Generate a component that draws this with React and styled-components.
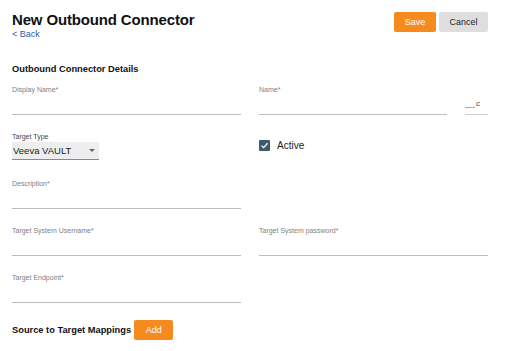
import React from "react";
import styled, { createGlobalStyle } from "styled-components";

const Global = createGlobalStyle`
  html, body { margin: 0; padding: 0; background: #fff; }
  body { font-family: "Liberation Sans", Arial, Helvetica, sans-serif; color: #111; }
  * { box-sizing: border-box; }
`;

const Page = styled.div`
  width: 512px;
  height: 351px;
  padding: 11px 24px 0 12px;
  overflow: hidden;
`;

const Header = styled.div`
  display: flex;
  justify-content: space-between;
  align-items: flex-start;
`;

const TitleBlock = styled.div`
  display: flex;
  flex-direction: column;
`;

const Title = styled.h1`
  margin: 0;
  font-size: 15px;
  line-height: 18px;
  letter-spacing: -0.15px;
  font-weight: 700;
  color: #111;
`;

const BackLink = styled.a`
  font-size: 9px;
  line-height: 10px;
  color: #1a5fa8;
  text-decoration: none;
`;

const Actions = styled.div`
  display: flex;
  gap: 3px;
  margin-top: 1px;
`;

const Button = styled.button`
  border: none;
  border-radius: 2px;
  height: 20px;
  padding: 0;
  width: ${(p) => p.$w}px;
  font-family: inherit;
  font-size: 9px;
  background: ${(p) => (p.$primary ? "#f58a1f" : "#dedede")};
  color: ${(p) => (p.$primary ? "#fff" : "#222")};
`;

const SectionTitle = styled.h2`
  margin: 24px 0 0;
  font-size: 9.3px;
  line-height: 12px;
  font-weight: 700;
`;

const Grid = styled.div`
  display: grid;
  grid-template-columns: 229px 229px;
  column-gap: 18px;
  row-gap: 17px;
  margin-top: 10px;
`;

const Field = styled.div`
  display: flex;
  flex-direction: column;
  height: 30px;
`;

const Label = styled.label`
  font-size: 7px;
  line-height: 10px;
  color: ${(p) => (p.$dark ? "#444" : "#808080")};
`;

const Input = styled.div`
  height: 20px;
  border-bottom: 1px solid #bdbdbd;
`;

const NameRow = styled.div`
  display: flex;
  gap: 18px;
  align-items: flex-end;
`;

const Suffix = styled.div`
  width: 23px;
  height: 20px;
  border-bottom: 1px solid #d0d0d0;
  display: flex;
  align-items: flex-end;
  justify-content: flex-start;
  font-size: 8px;
  line-height: 8px;
  color: #444;
  padding-bottom: 6px;
  &::before {
    content: "";
    width: 10px;
    border-bottom: 1px solid #aaa;
    margin-right: 1px;
  }
`;

const Select = styled.div`
  width: 87px;
  height: 18px;
  background: #eeeeee;
  border-bottom: 1px solid #8a8a8a;
  display: flex;
  align-items: center;
  justify-content: space-between;
  font-size: 9.5px;
  color: #222;
  padding: 0 0 0 1px;
`;

const Caret = styled.span`
  width: 0;
  height: 0;
  border-left: 3px solid transparent;
  border-right: 3px solid transparent;
  border-top: 3px solid #666;
  margin-right: 4px;
`;

const CheckRow = styled.div`
  display: flex;
  align-items: center;
  gap: 7px;
  padding-top: 8px;
  font-size: 10px;
  color: #222;
`;

const Box = styled.span`
  width: 11px;
  height: 11px;
  background: #3f5a6b;
  border-radius: 1px;
  display: flex;
  align-items: center;
  justify-content: center;
`;

const Footer = styled.div`
  display: flex;
  align-items: center;
  gap: 3px;
  margin-top: 17px;
`;

const FooterTitle = styled.h2`
  margin: 0;
  font-size: 9.3px;
  font-weight: 700;
`;

export default function App() {
  return (
    <Page>
      <Global />
      <Header>
        <TitleBlock>
          <Title>New Outbound Connector</Title>
          <BackLink href="#">&lt; Back</BackLink>
        </TitleBlock>
        <Actions>
          <Button $primary $w={42}>Save</Button>
          <Button $w={49}>Cancel</Button>
        </Actions>
      </Header>

      <SectionTitle>Outbound Connector Details</SectionTitle>

      <Grid>
        <Field>
          <Label>Display Name*</Label>
          <Input />
        </Field>
        <Field>
          <Label>Name*</Label>
          <NameRow>
            <Input style={{ flex: 1 }} />
            <Suffix>c</Suffix>
          </NameRow>
        </Field>

        <Field>
          <Label $dark>Target Type</Label>
          <Select>
            Veeva VAULT
            <Caret />
          </Select>
        </Field>
        <Field>
          <CheckRow>
            <Box>
              <svg width="9" height="9" viewBox="0 0 9 9">
                <path d="M1.5 4.6 L3.6 6.6 L7.6 2.2" fill="none" stroke="#fff" strokeWidth="1.3" />
              </svg>
            </Box>
            Active
          </CheckRow>
        </Field>

        <Field>
          <Label>Description*</Label>
          <Input />
        </Field>
        <div />

        <Field>
          <Label>Target System Username*</Label>
          <Input />
        </Field>
        <Field>
          <Label>Target System password*</Label>
          <Input />
        </Field>

        <Field>
          <Label>Target Endpoint*</Label>
          <Input />
        </Field>
        <div />
      </Grid>

      <Footer>
        <FooterTitle>Source to Target Mappings</FooterTitle>
        <Button $primary $w={39}>Add</Button>
      </Footer>
    </Page>
  );
}
